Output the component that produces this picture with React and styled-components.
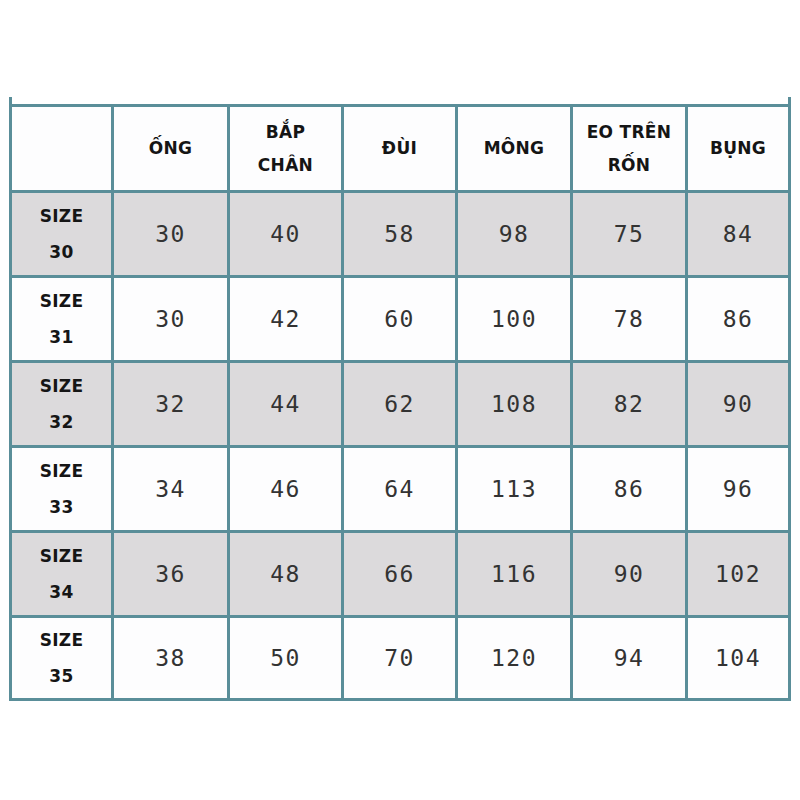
import React from "react";
import styled, { createGlobalStyle } from "styled-components";

const Global = createGlobalStyle`
  html, body { margin: 0; padding: 0; background: #ffffff; }
  body { width: 800px; height: 800px; overflow: hidden; }
`;

const LINE = "#5a8e99";

const Page = styled.div`
  width: 800px;
  height: 800px;
  background: #ffffff;
  padding: 97px 0 0 9px;
  box-sizing: border-box;
`;

const Frame = styled.div`
  width: 782px;
  box-sizing: border-box;
  border-left: 3px solid ${LINE};
  border-right: 3px solid ${LINE};
  padding-top: 7px;
`;

const Grid = styled.div`
  display: grid;
  grid-template-columns: 99px 113px 111px 111px 112px 112px 100px;
  grid-template-rows: 83px repeat(5, 82px) 80px;
  gap: 3px;
  padding: 3px 0;
  background: ${LINE};
`;

const Cell = styled.div`
  display: flex;
  align-items: center;
  justify-content: center;
  text-align: center;
  background: ${(p) => (p.$shaded ? "#dcdadc" : "#fdfdfe")};
`;

const Head = styled.div`
  font-family: "DejaVu Sans", "Noto Sans", sans-serif;
  font-weight: 700;
  font-size: 17px;
  letter-spacing: 0.3px;
  line-height: 33px;
  color: #151515;
`;

const SizeLabel = styled(Head)`
  line-height: 36px;
`;

const Num = styled.span`
  font-family: "DejaVu Sans Mono", monospace;
  font-size: 23px;
  letter-spacing: 1.5px;
  color: #333333;
`;

const headers = [["ỐNG"], ["BẮP", "CHÂN"], ["ĐÙI"], ["MÔNG"], ["EO TRÊN", "RỐN"], ["BỤNG"]];

const rows = [
  ["30", [30, 40, 58, 98, 75, 84]],
  ["31", [30, 42, 60, 100, 78, 86]],
  ["32", [32, 44, 62, 108, 82, 90]],
  ["33", [34, 46, 64, 113, 86, 96]],
  ["34", [36, 48, 66, 116, 90, 102]],
  ["35", [38, 50, 70, 120, 94, 104]],
];

export default function App() {
  return (
    <Page>
      <Global />
      <Frame>
        <Grid>
          <Cell />
          {headers.map((h, i) => (
            <Cell key={i}>
              <Head>
                {h.map((l, j) => (
                  <div key={j}>{l}</div>
                ))}
              </Head>
            </Cell>
          ))}
          {rows.map(([size, vals], r) => (
            <React.Fragment key={size}>
              <Cell $shaded={r % 2 === 0}>
                <SizeLabel>
                  <div>SIZE</div>
                  <div>{size}</div>
                </SizeLabel>
              </Cell>
              {vals.map((v, i) => (
                <Cell key={i} $shaded={r % 2 === 0}>
                  <Num>{v}</Num>
                </Cell>
              ))}
            </React.Fragment>
          ))}
        </Grid>
      </Frame>
    </Page>
  );
}
